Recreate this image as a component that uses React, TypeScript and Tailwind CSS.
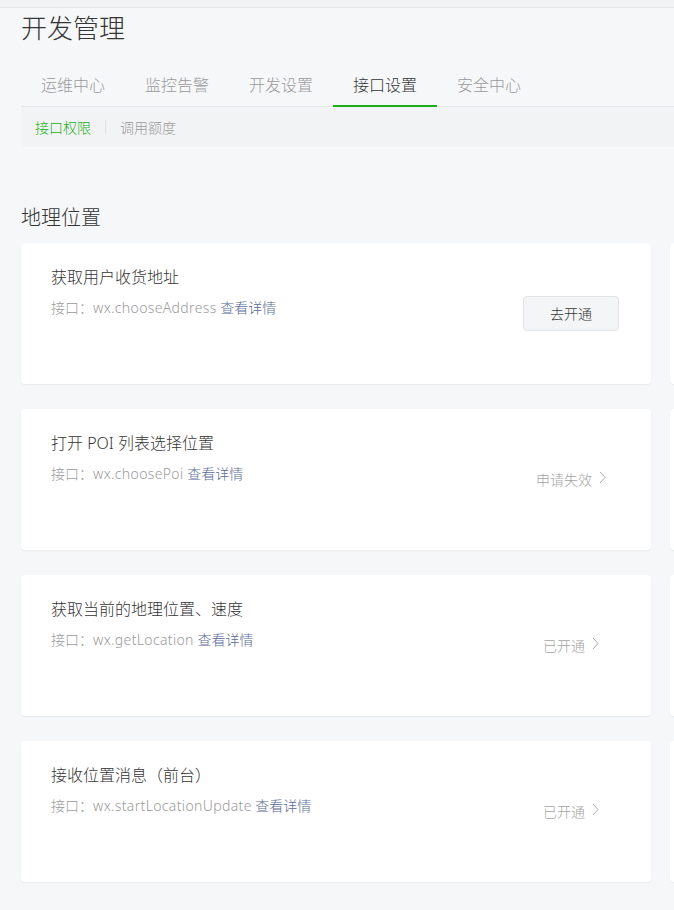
import { Fragment } from 'react';

const font = { fontFamily: '"Noto Sans", "Noto Sans CJK SC", sans-serif' };

const tabs = ['运维中心', '监控告警', '开发设置', '接口设置', '安全中心'];

type Item = {
  title: string;
  api: string;
  status: 'open' | 'expired' | 'done';
};

const items: Item[] = [
  { title: '获取用户收货地址', api: 'wx.chooseAddress', status: 'open' },
  { title: '打开 POI 列表选择位置', api: 'wx.choosePoi', status: 'expired' },
  { title: '获取当前的地理位置、速度', api: 'wx.getLocation', status: 'done' },
  { title: '接收位置消息（前台）', api: 'wx.startLocationUpdate', status: 'done' },
];

function Chevron() {
  return (
    <svg width="7" height="13" viewBox="0 0 7 13" className="ml-[7px] -mt-[4px]">
      <polyline points="1,1 6,6.5 1,12" fill="none" stroke="#aaaaaa" strokeWidth="1" />
    </svg>
  );
}

function Card({ item }: { item: Item }) {
  return (
    <div className="h-[141px] bg-white rounded-[4px] shadow-[0_1px_2px_rgba(0,0,0,0.06)] flex items-center">
      <div className="flex-1 self-start pl-[30px] pt-[22px]">
        <p className="text-[16px] leading-[24px] text-[#353535]">{item.title}</p>
        <p className="mt-[9px] text-[14px] leading-[20px] text-[#9a9a9a]">
          接口：<span className="tracking-[0.35px]">{item.api}</span>{' '}
          <span className="text-[#576b95]">查看详情</span>
        </p>
      </div>
      <div className="w-[96px] mr-[32px] flex items-center justify-center">
        {item.status === 'open' && (
          <button className="w-[96px] h-[35px] bg-[#f4f5f7] border border-[#e2e3e5] rounded-[4px] text-[14px] text-[#353535]">
            去开通
          </button>
        )}
        {item.status === 'expired' && (
          <span className="flex items-center text-[14px] text-[#a3a3a3]">
            申请失效
            <Chevron />
          </span>
        )}
        {item.status === 'done' && (
          <span className="flex items-center text-[14px] text-[#a3a3a3]">
            已开通
            <Chevron />
          </span>
        )}
      </div>
    </div>
  );
}

export default function App() {
  return (
    <div style={font} className="w-full min-h-[910px] bg-[#f6f7f9] overflow-hidden font-light">
      <div className="h-[8px] bg-[#f1f2f4] border-b border-[#e3e4e6]" />
      <div className="w-[1300px] pl-[21px]">
        <h1 className="mt-[2px] text-[26px] leading-[36px] text-[#353535]">开发管理</h1>

        <div className="mt-[18px] flex border-b border-[#e4e6e9]">
          {tabs.map((t) => (
            <div
              key={t}
              className={
                t === '接口设置'
                  ? 'relative h-[42px] px-[20px] flex items-center text-[16px] text-[#353535]'
                  : 'relative h-[42px] px-[20px] flex items-center text-[16px] text-[#9a9a9a]'
              }
            >
              {t}
              {t === '接口设置' && (
                <div className="absolute left-0 right-0 -bottom-[1px] h-[2px] bg-[#1aad19]" />
              )}
            </div>
          ))}
        </div>

        <div className="h-[40px] bg-[#f2f3f5] flex items-center pl-[14px] text-[14px]">
          <span className="text-[#1aad19]">接口权限</span>
          <span className="mx-[14px] w-px h-[14px] bg-[#e0e1e3]" />
          <span className="text-[#9a9a9a]">调用额度</span>
        </div>

        <h2 className="mt-[57px] mb-[11px] text-[20px] leading-[28px] text-[#353535]">地理位置</h2>

        <div className="grid grid-cols-[630px_630px] gap-x-[19px] gap-y-[25px]">
          {items.map((it) => (
            <Fragment key={it.title}>
              <Card item={it} />
              <div className="h-[141px] bg-white rounded-[4px] shadow-[0_1px_2px_rgba(0,0,0,0.06)]" />
            </Fragment>
          ))}
        </div>
      </div>
    </div>
  );
}
